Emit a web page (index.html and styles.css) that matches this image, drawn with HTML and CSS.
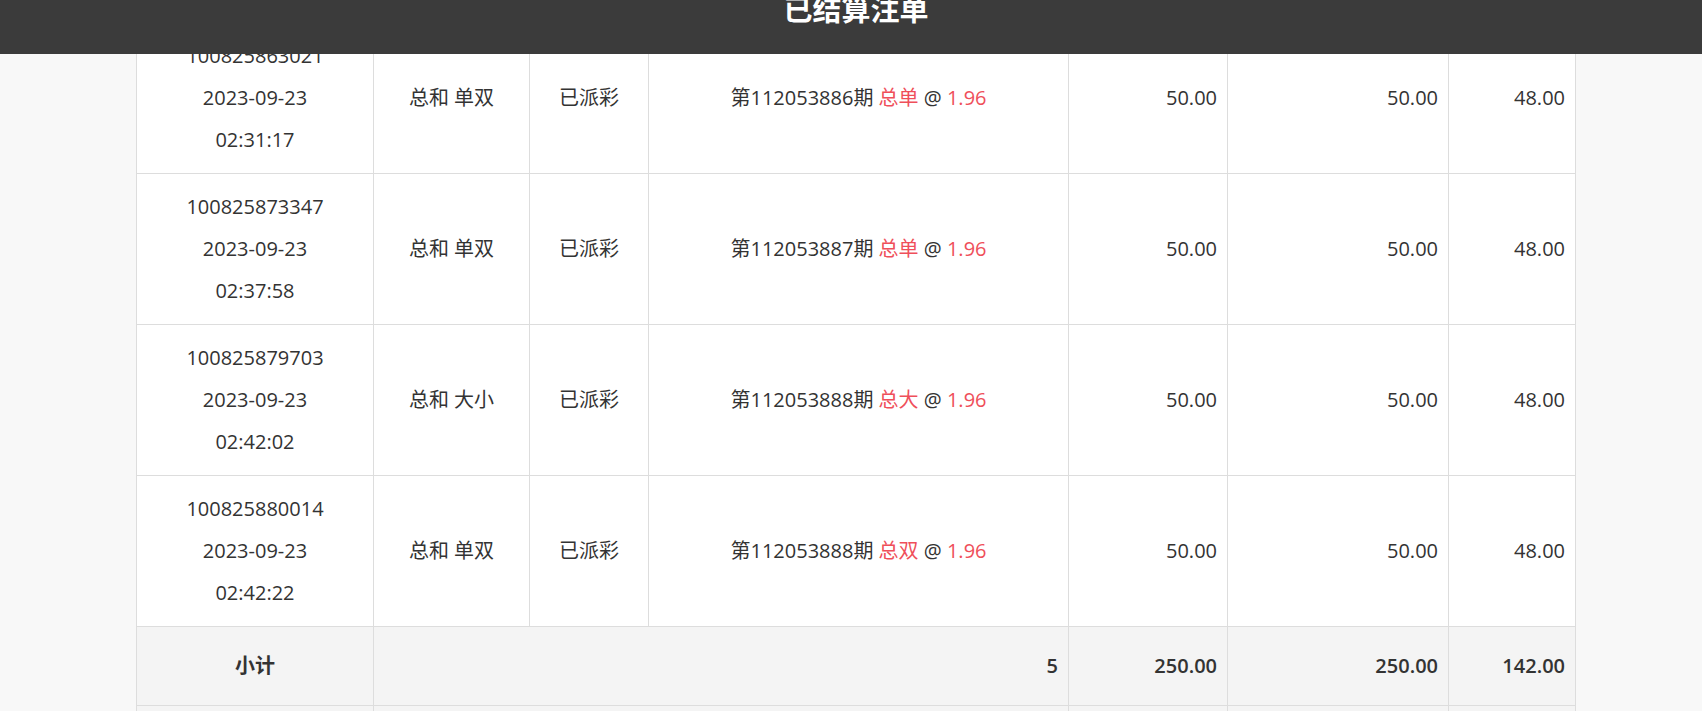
FILE: index.html
```html
<!DOCTYPE html>
<html lang="zh-CN">
<head>
<meta charset="utf-8">
<title>已结算注单</title>
<link rel="stylesheet" href="styles.css">
</head>
<body>
<header class="topbar">
  <h1 class="title">已结算注单</h1>
</header>
<main class="page">
  <table class="bets">
    <colgroup>
      <col class="w-id"><col class="w-play"><col class="w-state"><col class="w-detail"><col class="w-amt"><col class="w-valid"><col class="w-win">
    </colgroup>
    <tbody>
      <tr>
        <td class="center">100825863021<br>2023-09-23<br>02:31:17</td>
        <td class="center">总和 单双</td>
        <td class="center">已派彩</td>
        <td class="center">第112053886期 <span class="red">总单</span> @ <span class="red">1.96</span></td>
        <td class="num">50.00</td>
        <td class="num">50.00</td>
        <td class="num">48.00</td>
      </tr>
      <tr>
        <td class="center">100825873347<br>2023-09-23<br>02:37:58</td>
        <td class="center">总和 单双</td>
        <td class="center">已派彩</td>
        <td class="center">第112053887期 <span class="red">总单</span> @ <span class="red">1.96</span></td>
        <td class="num">50.00</td>
        <td class="num">50.00</td>
        <td class="num">48.00</td>
      </tr>
      <tr>
        <td class="center">100825879703<br>2023-09-23<br>02:42:02</td>
        <td class="center">总和 大小</td>
        <td class="center">已派彩</td>
        <td class="center">第112053888期 <span class="red">总大</span> @ <span class="red">1.96</span></td>
        <td class="num">50.00</td>
        <td class="num">50.00</td>
        <td class="num">48.00</td>
      </tr>
      <tr>
        <td class="center">100825880014<br>2023-09-23<br>02:42:22</td>
        <td class="center">总和 单双</td>
        <td class="center">已派彩</td>
        <td class="center">第112053888期 <span class="red">总双</span> @ <span class="red">1.96</span></td>
        <td class="num">50.00</td>
        <td class="num">50.00</td>
        <td class="num">48.00</td>
      </tr>
    </tbody>
    <tfoot>
      <tr class="sum">
        <td class="center">小计</td>
        <td class="num" colspan="3">5</td>
        <td class="num">250.00</td>
        <td class="num">250.00</td>
        <td class="num">142.00</td>
      </tr>
      <tr class="sum blank">
        <td></td>
        <td colspan="3"></td>
        <td></td>
        <td></td>
        <td></td>
      </tr>
    </tfoot>
  </table>
</main>
</body>
</html>
```
FILE: styles.css
```css
html, body {
  margin: 0;
  padding: 0;
}
body {
  background: #f8f8f8;
  color: #333;
  font-family: "Open Sans", "Noto Sans CJK SC", sans-serif;
  font-size: 20px;
}
.topbar {
  position: fixed;
  top: 0;
  left: 0;
  right: 0;
  height: 54px;
  background: #3b3b3b;
  display: flex;
  justify-content: center;
  padding-left: 10px;
  overflow: hidden;
  z-index: 10;
}
.title {
  margin: -6px 0 0;
  font-size: 29px;
  line-height: 29px;
  font-weight: bold;
  color: #fff;
  font-family: "Noto Sans CJK SC", sans-serif;
}
.page {
  padding: 22px 0 0 10px;
  display: flex;
  justify-content: center;
}
.bets {
  border-collapse: collapse;
  table-layout: fixed;
  width: 1439px;
  background: #fff;
}
.w-id { width: 237px; }
.w-play { width: 156px; }
.w-state { width: 119px; }
.w-detail { width: 420px; }
.w-amt { width: 159px; }
.w-valid { width: 221px; }
.w-win { width: 127px; }
.bets td {
  border: 1px solid #dddddd;
  padding: 12px 10px;
  line-height: 42px;
  vertical-align: middle;
  white-space: nowrap;
}
.center { text-align: center; }
.num { text-align: right; }
.red { color: #ef4f5a; }
.sum td {
  background: #f4f4f4;
  font-weight: 600;
  padding-top: 18px;
  padding-bottom: 18px;
}
.blank td {
  height: 42px;
}
```
